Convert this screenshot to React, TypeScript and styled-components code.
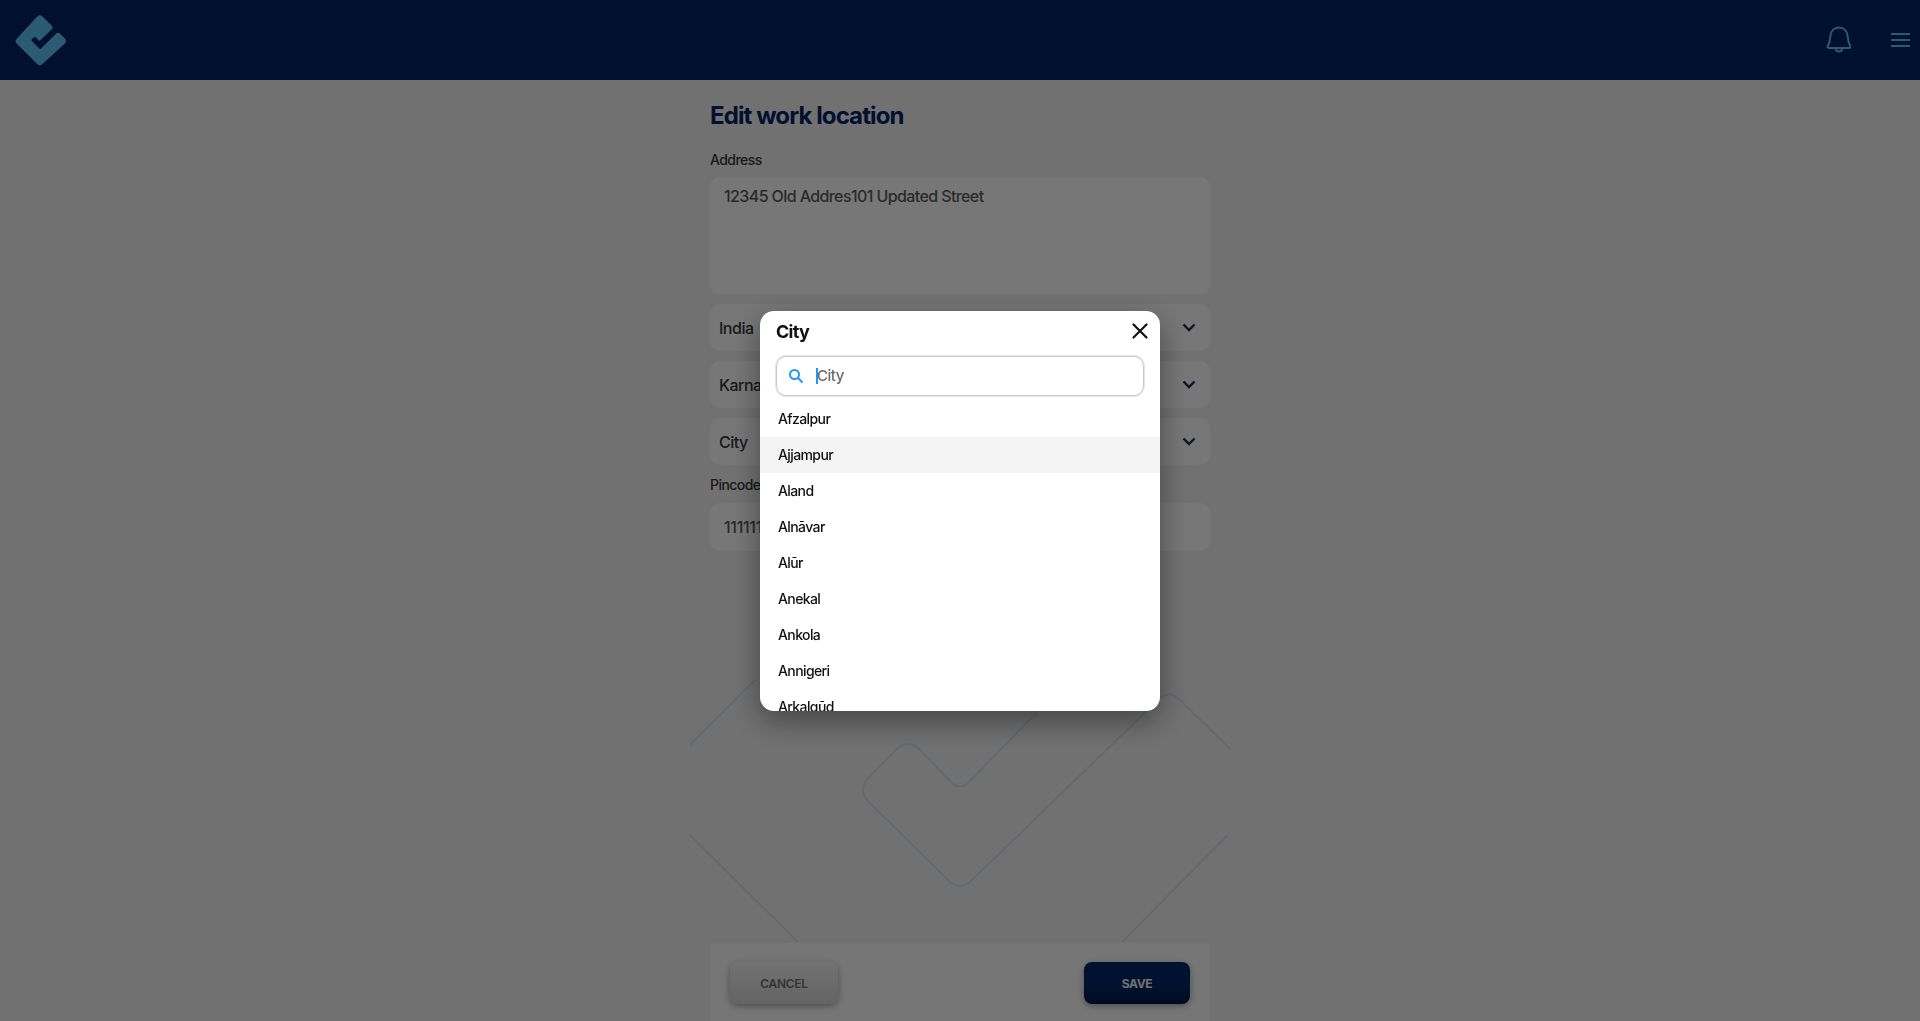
import styled, { createGlobalStyle } from "styled-components";

const cities = [
  "Afzalpur",
  "Ajjampur",
  "Aland",
  "Alnāvar",
  "Alūr",
  "Anekal",
  "Ankola",
  "Annigeri",
  "Arkalgūd",
];

function App() {
  return (
    <Page>
      <GlobalStyle />
      <Header>
        <Logo viewBox="0 0 54 54">
          <path
            d="M23 2.6a4 4 0 0 1 5.6 0l9.6 9.6a2.6 2.6 0 0 1 0 3.7L26 27.4a1 1 0 0 1-1.3 0l-3-3a1.6 1.6 0 0 0-2.3 0l-1.6 1.6a1.6 1.6 0 0 0 0 2.3l7.3 7.2a1.6 1.6 0 0 0 2.2 0l15.2-14.9a3.2 3.2 0 0 1 4.5 0l4.6 4.6a4 4 0 0 1 0 5.6L28.6 52a4 4 0 0 1-5.6 0L2 31a4 4 0 0 1 0-5.6z"
            fill="#58b4e6"
          />
        </Logo>
        <HeaderActions>
          <BellIcon width="26" height="27" viewBox="0 0 26 27" fill="none" stroke="#58b4e6" strokeWidth="2">
            <path d="M13 1.5c-5 0-8.2 3.6-8.6 8.6-.3 4-1 7-2.6 10-.5 1 .1 1.9 1.1 1.9h20.2c1 0 1.6-.9 1.1-1.9-1.6-3-2.3-6-2.6-10-.4-5-3.600-8.600-8.600-8.600z" />
            <path d="M9.500 22.500c.4 2 1.800 3 3.500 3s3.100-1 3.500-3" />
          </BellIcon>
          <MenuIcon>
            <span />
            <span />
            <span />
          </MenuIcon>
        </HeaderActions>
      </Header>

      <Main>
        <Watermark viewBox="0 0 540 262" fill="none" stroke="#58b4e6" strokeWidth="2" strokeOpacity="0.24">
          <path d="M0 65 69 -4" />
          <path d="M351 28 278 103Q270 110 262 103L230 70Q218 58 206 70L179 97Q167 110 179 122L258 200Q270 212 282 200L468 20Q479 9 490 20L540 69" />
          <path d="M0 155 108 262" />
          <path d="M538 155 432 262" />
        </Watermark>
        <Title>Edit work location</Title>
        <Label>Address</Label>
        <AddressArea defaultValue="12345 Old Addres101 Updated Street" />
        <SelectBox>
          India
          <Chevron />
        </SelectBox>
        <SelectBox>
          Karnataka
          <Chevron />
        </SelectBox>
        <SelectBox>
          City
          <Chevron />
        </SelectBox>
        <Label $top={11}>Pincode</Label>
        <PinInput defaultValue="111111" />
        <Footer>
          <CancelButton>CANCEL</CancelButton>
          <SaveButton>SAVE</SaveButton>
        </Footer>
      </Main>

      <Overlay>
        <Dialog>
          <DialogHead>
            <DialogTitle>City</DialogTitle>
            <svg width="18" height="18" viewBox="0 0 18 18" stroke="#111" strokeWidth="2.200" strokeLinecap="round">
              <path d="M2.500 2.500 15.500 15.500M15.500 2.500 2.500 15.500" />
            </svg>
          </DialogHead>
          <SearchBox>
            <svg width="16" height="16" viewBox="0 0 16 16" fill="none" stroke="#2196f3" strokeWidth="2">
              <circle cx="6.500" cy="6.500" r="4.500" />
              <path d="M10 10 14.500 14.500" />
            </svg>
            <Caret />
            <SearchInput placeholder="City" />
          </SearchBox>
          <CityList>
            {cities.map((city) => (
              <CityRow key={city} $active={city === "Ajjampur"}>
                {city}
              </CityRow>
            ))}
          </CityList>
        </Dialog>
      </Overlay>
    </Page>
  );
}

function Chevron() {
  return (
    <svg width="14" height="9" viewBox="0 0 14 9" fill="none" stroke="#1c2a44" strokeWidth="2.400">
      <path d="M1.500 1.500 7 7l5.500-5.500" />
    </svg>
  );
}

const GlobalStyle = createGlobalStyle`
  html, body {
    margin: 0;
    padding: 0;
    background: #e2e2e2;
    font-family: Inter, "Liberation Sans", sans-serif;
  }
  * {
    box-sizing: border-box;
  }
`;

const Page = styled.div`
  height: 100vh;
  display: flex;
  flex-direction: column;
  overflow: hidden;
`;

const Header = styled.header`
  height: 80px;
  flex: none;
  display: flex;
  align-items: center;
  justify-content: space-between;
  padding: 0 10px 0 15px;
  background: #00205c;
`;

const Logo = styled.svg`
  width: 52px;
  height: 52px;
`;

const HeaderActions = styled.div`
  display: flex;
  align-items: center;
  gap: 39px;
`;

const BellIcon = styled.svg`
  margin-top: -2px;
`;

const MenuIcon = styled.div`
  width: 19px;
  display: flex;
  flex-direction: column;
  gap: 4px;

  span {
    height: 2px;
    background: #58b4e6;
  }
`;

const Main = styled.main`
  position: relative;
  flex: 1;
  width: 500px;
  margin: 0 auto;
  display: flex;
  flex-direction: column;
`;

const Watermark = styled.svg`
  position: absolute;
  left: -20px;
  top: 600px;
  width: 540px;
  height: 262px;
  overflow: hidden;
`;

const Title = styled.h1`
  margin: 21px 0 0;
  font-size: 24px;
  line-height: 30px;
  font-weight: 700;
  letter-spacing: -0.9px;
  color: #00205c;
`;

const Label = styled.label<{ $top?: number }>`
  margin-top: ${(p) => p.$top ?? 20}px;
  margin-bottom: 9px;
  font-size: 14px;
  line-height: 17px;
  font-weight: 500;
  letter-spacing: -0.55px;
  color: #333;
`;

const AddressArea = styled.textarea`
  height: 117px;
  padding: 10px 14px;
  border: 0;
  border-radius: 10px;
  outline: 0;
  resize: none;
  background: #eeeeee;
  color: #555;
  font: 500 16px/19px Inter, "Liberation Sans", sans-serif;
  letter-spacing: -0.6px;
`;

const SelectBox = styled.div`
  height: 47px;
  margin-top: 10px;
  padding: 0 14px 0 9px;
  display: flex;
  align-items: center;
  justify-content: space-between;
  border-radius: 10px;
  background: #eeeeee;
  color: #333;
  font-size: 16px;
  font-weight: 500;
  letter-spacing: -0.5px;
`;

const PinInput = styled.input`
  height: 48px;
  margin-top: 1px;
  padding: 0 14px;
  border: 0;
  border-radius: 10px;
  outline: 0;
  background: #eeeeee;
  color: #555;
  font: 500 16px Inter, "Liberation Sans", sans-serif;
  letter-spacing: -0.3px;
`;

const Footer = styled.div`
  position: relative;
  margin-top: auto;
  height: 78px;
  padding: 19px 20px 0;
  display: flex;
  justify-content: space-between;
  align-items: flex-start;
  background: #ececec;
`;

const CancelButton = styled.button`
  width: 108px;
  height: 42px;
  border: 0;
  border-radius: 8px;
  background: linear-gradient(#e4e4e4, #c8c8c8);
  box-shadow: 0 2px 6px rgba(0, 0, 0, 0.35);
  color: #666;
  font: 600 12px Inter, "Liberation Sans", sans-serif;
  letter-spacing: -0.3px;
`;

const SaveButton = styled.button`
  width: 106px;
  height: 42px;
  border: 0;
  border-radius: 8px;
  background: linear-gradient(#00245f 60%, #001640);
  box-shadow: 0 2px 6px rgba(0, 0, 0, 0.35);
  color: #e2e2e2;
  font: 700 12px Inter, "Liberation Sans", sans-serif;
  letter-spacing: -0.4px;
`;

const Overlay = styled.div`
  position: fixed;
  inset: 0;
  display: flex;
  align-items: center;
  justify-content: center;
  background: rgba(0, 0, 0, 0.5);
`;

const Dialog = styled.div`
  width: 400px;
  height: 400px;
  display: flex;
  flex-direction: column;
  border-radius: 14px;
  overflow: hidden;
  background: #fff;
  box-shadow: 0 10px 30px rgba(0, 0, 0, 0.4);
`;

const DialogHead = styled.div`
  flex: none;
  height: 41px;
  margin-bottom: 4px;
  padding: 0 11px 0 16px;
  display: flex;
  align-items: center;
  justify-content: space-between;
`;

const DialogTitle = styled.div`
  font-size: 18px;
  font-weight: 700;
  letter-spacing: -0.7px;
  color: #111;
`;

const SearchBox = styled.div`
  position: relative;
  flex: none;
  height: 40px;
  margin: 0 16px;
  padding: 0 11px;
  display: flex;
  align-items: center;
  gap: 13px;
  border: 1px solid #c9c9c9;
  border-radius: 10px;
  box-shadow: 0 0 0 1px #e6e6e6;
`;

const Caret = styled.span`
  position: absolute;
  left: 39px;
  top: 11px;
  width: 2px;
  height: 16px;
  background: #2196f3;
`;

const SearchInput = styled.input`
  flex: 1;
  border: 0;
  outline: 0;
  padding: 0;
  caret-color: transparent;
  font: 500 15px Inter, "Liberation Sans", sans-serif;
  letter-spacing: -0.5px;

  &::placeholder {
    color: #6b6b6b;
    opacity: 1;
  }
`;

const CityList = styled.div`
  margin-top: 5px;
  flex: 1;
  overflow: hidden;
`;

const CityRow = styled.div<{ $active?: boolean }>`
  height: 36px;
  padding-left: 18px;
  display: flex;
  align-items: center;
  background: ${(p) => (p.$active ? "#f4f4f4" : "transparent")};
  color: #111;
  font-size: 14px;
  font-weight: 500;
  letter-spacing: -0.6px;
`;

export default App;
